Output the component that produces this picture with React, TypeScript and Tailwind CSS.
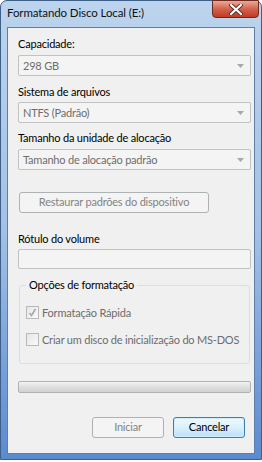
import React from 'react';

const font = { fontFamily: 'Lato, "Liberation Sans", sans-serif' };

function Combo({ value }: { value: string }) {
    return (
        <div className="ml-[10px] w-[233px] h-[21px] border border-[#c2c2c2] rounded-[2px] bg-[#f4f4f4] flex items-center justify-between pl-[4px] pr-[6px]">
            <span className="text-[11px] tracking-[-0.2px] text-[#6d6d6d] leading-none whitespace-nowrap">{value}</span>
            <svg width="7" height="4" viewBox="0 0 7 4">
                <path d="M0 0h7L3.5 4z" fill="#a8a8a8" />
            </svg>
        </div>
    );
}

function Label({ text, className }: { text: string; className?: string }) {
    return <div className={`ml-[10px] text-[11px] tracking-[-0.2px] leading-[16px] text-black whitespace-nowrap ${className ?? ''}`}>{text}</div>;
}

function CheckRow({ text, checked, className }: { text: string; checked?: boolean; className?: string }) {
    return (
        <div className={`flex items-center h-[13px] ml-[6px] ${className ?? ''}`}>
            <div className="w-[13px] h-[13px] shrink-0 border border-[#b9b9b9] bg-gradient-to-br from-[#e6e6e6] to-[#fafafa] flex items-center justify-center">
                {checked && (
                    <svg width="9" height="9" viewBox="0 0 9 9">
                        <path d="M1.5 5 L3.5 7.5 L7.5 1" stroke="#a9a9a9" strokeWidth="1.6" fill="none" />
                    </svg>
                )}
            </div>
            <span className="ml-[3px] text-[11px] tracking-[-0.2px] leading-none text-[#6d6d6d] whitespace-nowrap">{text}</span>
        </div>
    );
}

export default function App() {
    return (
        <div className="w-[262px] h-[462px] bg-white" style={font}>
            <div className="h-[460px] w-full rounded-t-[7px] border border-[#3d5f88] bg-gradient-to-b from-[#bcd4ed] via-[#a3c1e4] to-[#5a8ad0] flex flex-col">
                {/* title bar */}
                <div className="h-[26px] flex items-start justify-between">
                    <span className="mt-[4px] ml-[6px] text-[11.5px] tracking-[-0.1px] text-[#111] leading-[16px] whitespace-nowrap">Formatando Disco Local (E:)</span>
                    <div className="mr-[2px] -mt-px w-[47px] h-[18px] rounded-b-[4px] border border-[#6b2a22] bg-gradient-to-b from-[#e9a99a] via-[#d4614a] to-[#c23a22] flex items-center justify-center">
                        <svg width="14" height="11" viewBox="0 0 14 11">
                            <path d="M2 1 L12 10 M12 1 L2 10" stroke="#5a2a22" strokeWidth="4" strokeLinecap="round" />
                            <path d="M2 1 L12 10 M12 1 L2 10" stroke="#ffffff" strokeWidth="2.2" strokeLinecap="round" />
                        </svg>
                    </div>
                </div>

                {/* client area */}
                <div className="mx-[6px] h-[427px] border border-[#5d7ea6] bg-[#f0f0f0] flex flex-col">
                    <Label text="Capacidade:" className="mt-[8px]" />
                    <div className="mt-[3px]"><Combo value="298 GB" /></div>
                    <Label text="Sistema de arquivos" className="mt-[8px]" />
                    <div className="mt-[2px]"><Combo value="NTFS (Padrão)" /></div>
                    <Label text="Tamanho da unidade de alocação" className="mt-[7px]" />
                    <div className="mt-[3px]"><Combo value="Tamanho de alocação padrão" /></div>

                    <div className="mt-[22px] ml-[11px] w-[190px] h-[21px] border border-[#adb2b5] rounded-[3px] bg-[#f4f4f4] flex items-center justify-center text-[11px] tracking-[-0.2px] text-[#838383] whitespace-nowrap">
                        Restaurar padrões do dispositivo
                    </div>

                    <Label text="Rótulo do volume" className="mt-[18px]" />
                    <div className="mt-[2px] ml-[10px] w-[233px] h-[20px] border border-[#c2c2c2] rounded-[2px] bg-[#f4f4f4]" />

                    {/* group box */}
                    <div className="mt-[16px] ml-[11px] w-[231px] h-[79px] border border-[#d5dfe5] rounded-[3px] flex flex-col">
                        <span className="-mt-[9px] ml-[6px] self-start px-[3px] bg-[#f0f0f0] text-[11px] tracking-[-0.2px] leading-[16px] text-black whitespace-nowrap">Opções de formatação</span>
                        <CheckRow text="Formatação Rápida" checked className="mt-[13px]" />
                        <CheckRow text="Criar um disco de inicialização do MS-DOS" className="mt-[14px]" />
                    </div>

                    {/* progress */}
                    <div className="mt-[17px] ml-[10px] w-[233px] h-[12px] border border-[#b2b2b2] rounded-[2px] bg-gradient-to-b from-[#f3f3f3] via-[#dedede] to-[#d2d2d2]" />

                    {/* buttons */}
                    <div className="mt-[24px] ml-[84px] flex gap-[9px]">
                        <div className="w-[72px] h-[21px] border border-[#adb2b5] rounded-[3px] bg-[#f4f4f4] flex items-center justify-center text-[11px] tracking-[-0.2px] text-[#838383]">
                            Iniciar
                        </div>
                        <div className="w-[72px] h-[21px] border border-[#3c7fb1] rounded-[3px] bg-gradient-to-b from-[#f0f8fd] via-[#dcf0fc] to-[#b9dff7] shadow-[inset_0_0_0_1px_#cdeeff] flex items-center justify-center text-[11px] tracking-[-0.2px] text-black">
                            Cancelar
                        </div>
                    </div>
                </div>
            </div>
        </div>
    );
}
